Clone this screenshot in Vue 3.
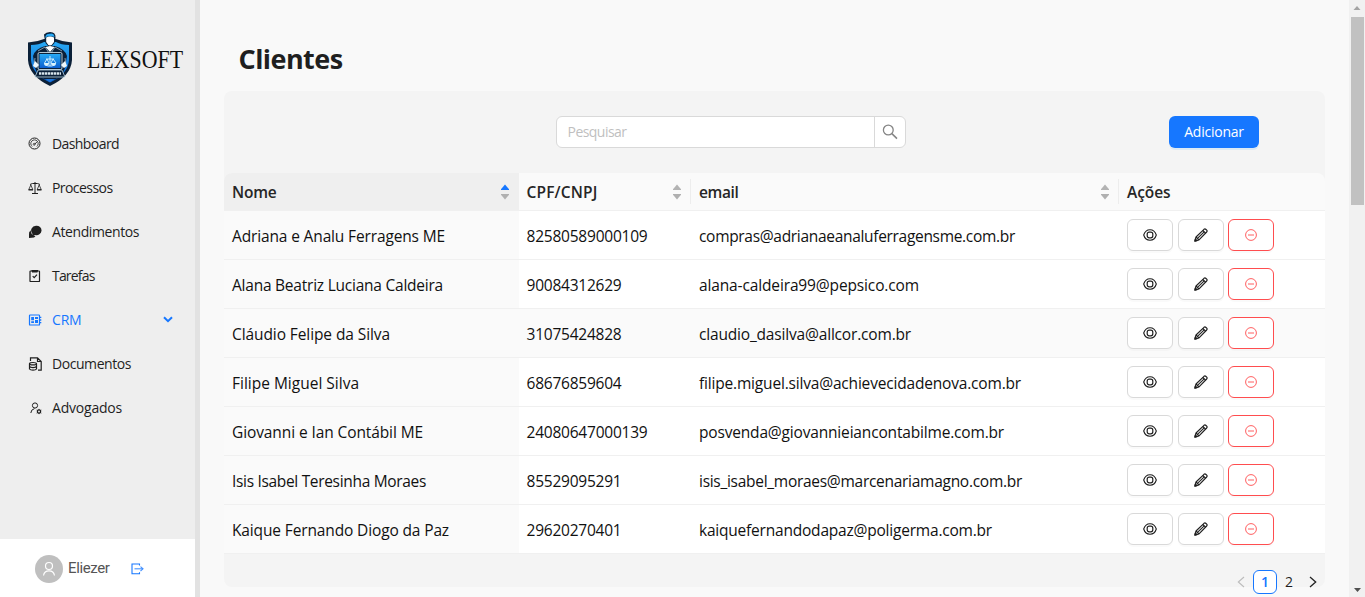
<script setup>
const menu = [
  { label: 'Dashboard', icon: 'dash', width: 67 },
  { label: 'Processos', icon: 'scale', width: 60.5 },
  { label: 'Atendimentos', icon: 'chat', width: 87 },
  { label: 'Tarefas', icon: 'task', width: 42.5 },
  { label: 'CRM', icon: 'crm', width: 29.5, active: true },
  { label: 'Documentos', icon: 'docs', width: 79 },
  { label: 'Advogados', icon: 'user', width: 70 }
]
const columns = [
  { label: 'Nome', sort: 'asc', width: 44.5 },
  { label: 'CPF/CNPJ', sort: 'none', width: 71 },
  { label: 'email', sort: 'none', width: 39.5 },
  { label: 'Ações', width: 43.5 }
]
const rows = [
  { cells: ['Adriana e Analu Ferragens ME', '82580589000109', 'compras@adrianaeanaluferragensme.com.br'], widths: [213, 121, 316] },
  { cells: ['Alana Beatriz Luciana Caldeira', '90084312629', 'alana-caldeira99@pepsico.com'], widths: [211, 95, 220] },
  { cells: ['Cláudio Felipe da Silva', '31075424828', 'claudio_dasilva@allcor.com.br'], widths: [158, 95, 212], hover: true },
  { cells: ['Filipe Miguel Silva', '68676859604', 'filipe.miguel.silva@achievecidadenova.com.br'], widths: [127, 95, 322] },
  { cells: ['Giovanni e Ian Contábil ME', '24080647000139', 'posvenda@giovannieiancontabilme.com.br'], widths: [191, 121, 305] },
  { cells: ['Isis Isabel Teresinha Moraes', '85529095291', 'isis_isabel_moraes@marcenariamagno.com.br'], widths: [194, 95, 323] },
  { cells: ['Kaique Fernando Diogo da Paz', '29620270401', 'kaiquefernandodapaz@poligerma.com.br'], widths: [217, 95, 293] }
]

const vFit = {
  mounted(el, { value }) {
    const range = document.createRange()
    range.selectNodeContents(el)
    const natural = range.getBoundingClientRect().width
    el.style.letterSpacing = `${(value - natural) / el.textContent.length}px`
  }
}
</script>

<template>
  <div class="app">
    <aside class="sidebar">
      <div class="brand">
        <svg class="shield" width="46" height="56" viewBox="0 0 46 56">
          <defs>
            <linearGradient id="blue" x1="0" y1="0" x2="0" y2="1">
              <stop offset="0" stop-color="#27a9f5" /><stop offset="1" stop-color="#0b5fd0" />
            </linearGradient>
          </defs>
          <path d="M1 11.5Q10 11 17 8H29Q36 11 45 11.5V29Q44 45 23 55Q2 45 1 29Z" fill="#0b2038" />
          <path d="M4 14Q12 14 17 11H29Q34 14 42 14V29Q41 43 23 51.500Q5 43 4 29Z" fill="url(#blue)" />
          <path d="M8 37L6 25Q8 18 18 15H28Q38 18 40 25L38 37L34 46L23 50L12 46Z" fill="#0b2038" />
          <path d="M17 3.500Q19 1 23 1Q29 1 28.500 7L27.500 12Q23 19 18.500 12L17.500 7Z" fill="#0b2038" />
          <path d="M18.500 5Q19.500 2.300 23 2.700Q27 2 27.500 6L26 5.500H20L18.500 7Z" fill="#27a9f5" />
          <path d="M19.200 6.500Q23 4.500 27 6.500V11Q25 14.500 23 14.500Q21 14.500 19.200 11Z M18.500 16L23 15L27.500 16L23 21Z" fill="#fff" />
          <path d="M11 20L18 16L22 22M35 20L28 16L24 22M8 27L7 35M38 27L39 35" fill="none" stroke="#b7cedd" stroke-width=".7" />
          <rect x="11" y="21.500" width="24" height="17" rx="1.500" fill="#0b2038" stroke="#e0f1fa" stroke-width=".8" />
          <rect x="12.500" y="23" width="21" height="14" fill="url(#blue)" />
          <path d="M8 30L12 34L9 37L6 35ZM38 30L34 34L37 37L40 35Z" fill="#edf7fc" />
          <path d="M11 39H35L38 46H8Z" fill="#0b2038" stroke="#bdd5e2" stroke-width=".8" />
          <path d="M12 42.500H34" stroke="#d8e5ec" stroke-width="2.500" stroke-dasharray="2.400 .6" />
          <path d="M23 25V35M19 28H27M20.500 35H25.500M20 28L17.500 32M20 28L22 32M26 28L24 32M26 28L29 32" fill="none" stroke="#d9f4ff" stroke-width=".9" />
          <path d="M17 32H22Q22 35 19.500 35Q17 35 17 32ZM24 32H29Q29 35 26.500 35Q24 35 24 32Z" fill="#d9f4ff" />
          <path d="M18 48H28L23 51Z" fill="#1b76dc" />
        </svg>
        <svg class="wordmark" width="98" height="24" viewBox="0 0 98 24">
          <text x="0" y="20" textLength="96" lengthAdjust="spacingAndGlyphs">LEXSOFT</text>
        </svg>
      </div>

      <nav class="menu">
        <a v-for="item in menu" :key="item.label" class="menu-item" :class="{ active: item.active }">
          <svg class="menu-icon" width="14" height="14" viewBox="0 0 14 14" fill="none" stroke="currentColor">
            <g v-if="item.icon === 'dash'">
              <circle cx="6.500" cy="6.500" r="5.500" stroke-width="1" />
              <path d="M4.200 9.500A3.700 3.700 0 1 1 8.800 9.500" stroke-width=".8" />
              <path d="M6.500 7.500L9 4.800" stroke-width=".9" />
              <circle cx="6.200" cy="7.300" r="1" stroke-width=".7" />
            </g>
            <g v-else-if="item.icon === 'scale'" stroke-width="1">
              <path d="M7 1V12M4 12.500H10M2 3.500L4.500 2.500H9.500L12 3.500" />
              <path d="M2.800 4L.8 8.500H4.800ZM11.200 4L9.200 8.500H13.200Z" stroke-width=".8" />
              <path d="M.5 8.800H5M9 8.800H13.500" stroke-width="1.200" />
            </g>
            <g v-else-if="item.icon === 'chat'" fill="currentColor" stroke="none">
              <path d="M8 .8A5 4.700 0 1 1 7.200 10L4.500 11.200L4.300 8.500A5 4.700 0 0 1 8 .8Z" />
              <path d="M2.700 5.300Q2.600 10.300 7.500 11.200L6 12.500L1 13V9.500Q.5 7 2.700 5.300Z" />
            </g>
            <g v-else-if="item.icon === 'task'" stroke-width="1.200">
              <rect x="2" y="2" width="9.500" height="10.500" rx=".6" />
              <path d="M3.500 1.700H10M4 2.700H9.500" stroke-width="1.400" />
              <path d="M4.700 7.200L6.200 8.700L9 5.700" />
            </g>
            <g v-else-if="item.icon === 'crm'" stroke-width="1.200">
              <rect x="1.500" y="2" width="10" height="10" rx=".6" />
              <path d="M3.200 4H6V7.200H3.200ZM7 4H10V6H7ZM3.200 8.200H6V10H3.200ZM7 7H10V10H7Z" fill="currentColor" stroke="none" />
              <path d="M12 4.300H13.300M12 7H13.300M12 9.700H13.300" stroke-width="1.300" />
            </g>
            <g v-else-if="item.icon === 'docs'" stroke-width="1.200">
              <path d="M2.500 4V.8H9.500L13.200 4.500V13.200H10M9.500 .8V4.500H13" />
              <ellipse cx="5" cy="6.700" rx="3.500" ry="1.200" />
              <path d="M1.500 6.700V12C2.500 13.500 7.500 13.500 8.500 12V6.700M1.500 9.400C2.500 10.900 7.500 10.900 8.500 9.400" />
            </g>
            <g v-else stroke-width="1">
              <circle cx="7" cy="4.500" r="2.600" />
              <path d="M2.800 12Q3 8.500 6.500 7.600" />
              <circle cx="11" cy="10.500" r="1.600" stroke-width="1.300" />
              <path d="M11 7.900V8.700M11 12.200V13.100M8.700 9.200L9.500 9.700M13.300 9.200L12.500 9.700M8.700 12L9.500 11.400M13.300 12L12.500 11.400" />
            </g>
          </svg>
          <span v-fit="item.width">{{ item.label }}</span>
          <svg v-if="item.active" class="chevron" width="10" height="7" viewBox="0 0 10 7"><path d="M1 1.200L5 5.200L9 1.200" fill="none" stroke="currentColor" stroke-width="2" /></svg>
        </a>
      </nav>

      <div class="account">
        <span class="avatar">
          <svg width="14" height="16" viewBox="0 0 14 16" fill="none" stroke="#fff" stroke-width="1.200">
            <circle cx="7" cy="5" r="3.500" /><path d="M1.500 14.500A5.600 5.600 0 0 1 12.500 14.500" />
          </svg>
        </span>
        <span v-fit="41.5" class="account-name">Eliezer</span>
        <svg class="logout" width="13" height="12" viewBox="0 0 13 12" fill="none" stroke="#1677ff" stroke-width="1.100">
          <path d="M8.500 2.500V1H1V10.700H8.500V9.200" /><path d="M3.500 5.800H11.500" stroke-opacity=".8" /><path d="M9.500 3.700L12 5.800L9.500 8" stroke-opacity=".8" />
        </svg>
      </div>
    </aside>

    <main class="content">
      <h1><span v-fit="104">Clientes</span></h1>
      <section class="panel">
        <div class="toolbar">
          <div class="search">
            <div class="search-field"><span v-fit="59">Pesquisar</span></div>
            <div class="search-button">
              <svg width="16" height="16" viewBox="0 0 16 16" fill="none" stroke="#858585" stroke-width="1.300">
                <circle cx="6.300" cy="6" r="4.900" /><path d="M9.900 9.600L15 14.600" stroke-width="1.500" />
              </svg>
            </div>
          </div>
          <button class="add"><span v-fit="59.5">Adicionar</span></button>
        </div>

        <div class="row head">
          <div v-for="(col, i) in columns" :key="col.label" class="cell" :class="{ sorted: col.sort === 'asc', divided: i === 1 || i === 2 }">
            <span v-fit="col.width">{{ col.label }}</span>
            <svg v-if="col.sort" class="sorter" width="8" height="16" viewBox="0 0 8 16">
              <path d="M4 .5L8 5.200V6H0V5.200Z" :fill="col.sort === 'asc' ? '#1677ff' : '#b3b3b3'" />
              <path d="M0 10H8V10.800L4 15.500L0 10.800Z" fill="#b0b0b0" />
            </svg>
          </div>
        </div>
        <div v-for="row in rows" :key="row.cells[0]" class="row" :class="{ hover: row.hover }">
          <div v-for="(text, i) in row.cells" :key="text" class="cell"><span v-fit="row.widths[i]">{{ text }}</span></div>
          <div class="cell actions">
            <button class="action" aria-label="Visualizar">
              <svg width="14" height="12" viewBox="0 0 14 12" fill="none" stroke="#1f1f1f" stroke-width="1.100">
                <path d="M.7 6C1.700 2.800 4 .7 7 .7S12.300 2.800 13.300 6C12.300 9.200 10 11.300 7 11.300S1.700 9.200.7 6Z" /><rect x="4.200" y="3.200" width="5.600" height="5.600" rx="2" stroke-width="1.200" />
              </svg>
            </button>
            <button class="action edit" aria-label="Editar">
              <svg width="14" height="14" viewBox="0 0 14 14" fill="none" stroke="#1f1f1f" stroke-width="1.150" stroke-linejoin="round">
                <path d="M1 13L2 9L10 1.300Q11 .5 12 1.500L12.700 2.200Q13.500 3 12.700 4L5 11.900Z" />
                <path d="M2 9L5 11.900M8.800 2.500L11.600 5.200" />
                <path d="M3.500 10.400L10.200 3.900" stroke-width="1.100" />
                <path d="M.8 13.200L1.300 11L3 12.700Z" fill="#1f1f1f" />
              </svg>
            </button>
            <button class="action danger" aria-label="Remover">
              <svg width="12" height="12" viewBox="0 0 12 12" fill="none" stroke="#ff4d4f" stroke-width=".9"><circle cx="6" cy="6" r="5.400" /><path d="M3 6H9" /></svg>
            </button>
          </div>
        </div>

        <div class="pagination">
          <svg width="8" height="12" viewBox="0 0 8 12"><path d="M7 1L1.300 6L7 11" fill="none" stroke="#bcbcbc" stroke-width="1.100" /></svg>
          <span class="page current">1</span>
          <span class="page">2</span>
          <svg class="next" width="8" height="12" viewBox="0 0 8 12"><path d="M1 1L6.700 6L1 11" fill="none" stroke="#222" stroke-width="1.300" /></svg>
        </div>
      </section>
    </main>

    <div class="scrollbar">
      <svg width="16" height="17" viewBox="0 0 16 17"><path d="M4.500 10H11.500L8 6Z" fill="#a3a3a3" /></svg>
      <div class="thumb"></div>
      <svg class="down" width="16" height="17" viewBox="0 0 16 17"><path d="M5 8H12L8.500 12Z" fill="#505050" /></svg>
    </div>
  </div>
</template>

<style>
body { margin: 0; overflow: hidden; }
</style>

<style scoped>
.app { display: flex; width: 1365px; height: 597px; overflow: hidden; background: #f9f9f9; color: rgba(0, 0, 0, .88); font: 14px/22px "Open Sans", "Noto Sans", sans-serif; }
.app * { box-sizing: border-box; }
svg { display: block; flex: none; }
span { white-space: nowrap; }
.sidebar { display: flex; flex-direction: column; flex: none; width: 200px; background: #eee; border-right: 5px solid #e2e2e2; }
.brand { display: flex; height: 122px; padding: 31px 0 0 27px; }
.wordmark { margin: 17px 0 0 14px; overflow: visible; }
.wordmark text { font: 26px "Liberation Serif", serif; fill: #111; }
.menu { display: flex; flex-direction: column; }
.menu-item { display: flex; align-items: center; height: 44px; padding: 0 22px 0 28px; color: #1f1f1f; }
.menu-item.active { color: #1677ff; }
.menu-icon { margin-right: 10px; }
.chevron { margin-left: auto; margin-top: -2px; }
.account { display: flex; align-items: center; margin-top: auto; height: 58px; padding: 2px 0 0 35px; background: #fff; }
.avatar { display: grid; place-items: center; width: 28px; height: 28px; border-radius: 50%; background: #bfbfbf; }
.account-name { width: 42px; margin: -2px 0 0 5px; font: 15px/22px Roboto, sans-serif; color: #555; }
.logout { margin-left: 20.500px; }
.content { display: flex; flex-direction: column; flex: 1; min-width: 0; padding: 0 24px; }
h1 { flex: none; height: 91px; margin: 0; padding: 40px 0 0 14.500px; font-size: 27px; line-height: 38px; font-weight: 700; color: #1f1f1f; }
.panel { display: flex; flex-direction: column; flex: none; height: 496px; background: #f4f4f4; border-radius: 8px; }
.toolbar { display: flex; flex: none; height: 82px; padding: 25px 66px 0 332px; justify-content: space-between; }
.search { display: flex; width: 350px; height: 32px; border: 1px solid #d9d9d9; border-radius: 6px; background: #fff; overflow: hidden; }
.search-field { flex: 1; padding: 4px 10.500px; color: #bfbfbf; }
.search-button { display: grid; place-items: center; width: 31px; border-left: 1px solid #d9d9d9; }
.add { width: 90px; height: 32px; padding: 0; border: 0; border-radius: 6px; background: #1677ff; box-shadow: 0 2px 0 rgba(5, 145, 255, .1); color: #fff; font: 500 14px/22px "Open Sans", sans-serif; }
.row { display: grid; flex: none; grid-template-columns: 295px 172px 428px 206px; height: 49px; background: #fff; font-size: 15.500px; color: #111; }
.cell { display: flex; align-items: center; min-width: 0; padding: 2px 8px 0; border-bottom: 1px solid #f0f0f0; }
.cell:nth-child(2) { padding-left: 7.500px; }
.cell:first-child, .hover .cell { background: #fafafa; }
.head { height: 38px; background: #fafafa; border-radius: 8px 8px 0 0; overflow: hidden; font-weight: 600; color: #262626; }
.head .cell { position: relative; padding-top: 1px; }
.head .sorted { background: #efefef; }
.head .divided::after { content: ""; position: absolute; right: 0; top: 6px; width: 1px; height: 25px; background: #ededed; }
.sorter { margin: -1px 2px 0 auto; }
.row .actions { padding-top: 0; gap: 5px; }
.action { display: grid; place-items: center; width: 46px; height: 32px; padding: 0; border: 1px solid #d9d9d9; border-radius: 6px; background: #fff; box-shadow: 0 2px 0 rgba(0, 0, 0, .02); }
.danger { margin-left: -1px; border-color: #ff4d4f; }
.pagination { display: flex; align-items: center; justify-content: flex-end; height: 24px; margin-top: 16px; padding-right: 8px; }
.page { width: 24px; height: 24px; line-height: 24px; text-align: center; border-radius: 6px; }
.current { margin-left: 8px; border: 1px solid #1677ff; background: #fff; color: #1677ff; font-weight: 600; line-height: 22px; }
.next { margin-left: 8px; }
.scrollbar { display: flex; flex-direction: column; flex: none; width: 16px; background: #f1f1f1; }
.thumb { height: 188px; margin: 0 1px 0 2px; background: #c1c1c1; }
.down { margin-top: auto; }
</style>
